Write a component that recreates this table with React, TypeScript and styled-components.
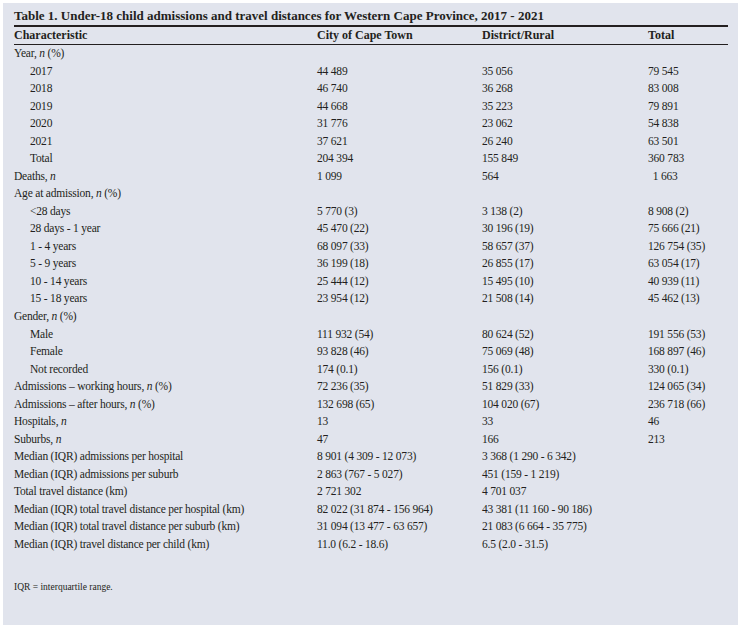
import React from 'react';
import styled, { createGlobalStyle } from 'styled-components';

const GlobalStyle = createGlobalStyle`
  html, body {
    margin: 0;
    padding: 0;
    background: #ffffff;
  }
  body {
    font-family: "Liberation Serif", "Times New Roman", serif;
    color: #231f20;
  }
`;

// Tipos
interface RowData {
  label: React.ReactNode;
  city?: string;
  rural?: string;
  total?: string;
  indent?: boolean;
}

const Panel = styled.div`
  margin: 3px 3px 0 3px;
  height: 622px;
  box-sizing: border-box;
  background: #e1e4ed;
  padding: 5px 10px 0 11px;
`;

const Title = styled.div`
  font-size: 13px;
  font-weight: bold;
  line-height: 16px;
  padding-bottom: 1px;
  border-bottom: 2px solid #231f20;
`;

const Grid = styled.div`
  display: grid;
  grid-template-columns: 303px 165px 166px 1fr;
`;

const HeaderRow = styled(Grid)`
  height: 17px;
  line-height: 17px;
  font-size: 12px;
  font-weight: bold;
  border-bottom: 1px solid #231f20;
`;

const Row = styled(Grid)`
  height: 17.54px;
  line-height: 17.54px;
  font-size: 11.5px;
  letter-spacing: -0.2px;
  white-space: nowrap;
`;

const Label = styled.div<{ $indent?: boolean }>`
  padding-left: ${props => (props.$indent ? '16px' : '0')};
`;

const Cell = styled.div``;

const Footnote = styled.div`
  margin-top: 28px;
  font-size: 9.5px;
  line-height: 12px;
`;

const N = () => <em>n</em>;

const rows: RowData[] = [
  { label: <>Year, <N /> (%)</> },
  { label: '2017', city: '44 489', rural: '35 056', total: '79 545', indent: true },
  { label: '2018', city: '46 740', rural: '36 268', total: '83 008', indent: true },
  { label: '2019', city: '44 668', rural: '35 223', total: '79 891', indent: true },
  { label: '2020', city: '31 776', rural: '23 062', total: '54 838', indent: true },
  { label: '2021', city: '37 621', rural: '26 240', total: '63 501', indent: true },
  { label: 'Total', city: '204 394', rural: '155 849', total: '360 783', indent: true },
  { label: <>Deaths, <N /></>, city: '1 099', rural: '564', total: '\u2009 1 663' },
  { label: <>Age at admission, <N /> (%)</> },
  { label: '<28 days', city: '5 770 (3)', rural: '3 138 (2)', total: '8 908 (2)', indent: true },
  { label: '28 days - 1 year', city: '45 470 (22)', rural: '30 196 (19)', total: '75 666 (21)', indent: true },
  { label: '1 - 4 years', city: '68 097 (33)', rural: '58 657 (37)', total: '126 754 (35)', indent: true },
  { label: '5 - 9 years', city: '36 199 (18)', rural: '26 855 (17)', total: '63 054 (17)', indent: true },
  { label: '10 - 14 years', city: '25 444 (12)', rural: '15 495 (10)', total: '40 939 (11)', indent: true },
  { label: '15 - 18 years', city: '23 954 (12)', rural: '21 508 (14)', total: '45 462 (13)', indent: true },
  { label: <>Gender, <N /> (%)</> },
  { label: 'Male', city: '111 932 (54)', rural: '80 624 (52)', total: '191 556 (53)', indent: true },
  { label: 'Female', city: '93 828 (46)', rural: '75 069 (48)', total: '168 897 (46)', indent: true },
  { label: 'Not recorded', city: '174 (0.1)', rural: '156 (0.1)', total: '330 (0.1)', indent: true },
  { label: <>Admissions – working hours, <N /> (%)</>, city: '72 236 (35)', rural: '51 829 (33)', total: '124 065 (34)' },
  { label: <>Admissions – after hours, <N /> (%)</>, city: '132 698 (65)', rural: '104 020 (67)', total: '236 718 (66)' },
  { label: <>Hospitals, <N /></>, city: '13', rural: '33', total: '46' },
  { label: <>Suburbs, <N /></>, city: '47', rural: '166', total: '213' },
  { label: 'Median (IQR) admissions per hospital', city: '8 901 (4 309 - 12 073)', rural: '3 368 (1 290 - 6 342)' },
  { label: 'Median (IQR) admissions per suburb', city: '2 863 (767 - 5 027)', rural: '451 (159 - 1 219)' },
  { label: 'Total travel distance (km)', city: '2 721 302', rural: '4 701 037' },
  { label: 'Median (IQR) total travel distance per hospital (km)', city: '82 022 (31 874 - 156 964)', rural: '43 381 (11 160 - 90 186)' },
  { label: 'Median (IQR) total travel distance per suburb (km)', city: '31 094 (13 477 - 63 657)', rural: '21 083 (6 664 - 35 775)' },
  { label: 'Median (IQR) travel distance per child (km)', city: '11.0 (6.2 - 18.6)', rural: '6.5 (2.0 - 31.5)' },
];

const App: React.FC = () => {
  return (
    <>
      <GlobalStyle />
      <Panel>
        <Title>
          Table 1. Under-18 child admissions and travel distances for Western Cape Province, 2017 - 2021
        </Title>

        <HeaderRow>
          <Cell>Characteristic</Cell>
          <Cell>City of Cape Town</Cell>
          <Cell>District/Rural</Cell>
          <Cell>Total</Cell>
        </HeaderRow>

        {rows.map((row, i) => (
          <Row key={i}>
            <Label $indent={row.indent}>{row.label}</Label>
            <Cell>{row.city}</Cell>
            <Cell>{row.rural}</Cell>
            <Cell>{row.total}</Cell>
          </Row>
        ))}

        <Footnote>IQR = interquartile range.</Footnote>
      </Panel>
    </>
  );
};

export default App;
